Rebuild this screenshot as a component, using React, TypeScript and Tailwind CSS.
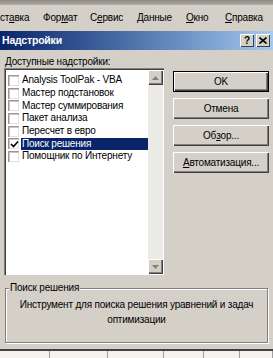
import React from 'react';

const menu = [
  { pre: 'ст', u: 'а', post: 'вка', w: 43 },
  { pre: 'Фор', u: 'м', post: 'ат', w: 47 },
  { pre: 'С', u: 'е', post: 'рвис', w: 47 },
  { pre: '', u: 'Д', post: 'анные', w: 49 },
  { pre: '', u: 'О', post: 'кно', w: 39 },
  { pre: '', u: 'С', post: 'правка', w: 48 },
];

const addins = [
  { name: 'Analysis ToolPak - VBA', checked: false },
  { name: 'Мастер подстановок', checked: false },
  { name: 'Мастер суммирования', checked: false },
  { name: 'Пакет анализа', checked: false },
  { name: 'Пересчет в евро', checked: false },
  { name: 'Поиск решения', checked: true },
  { name: 'Помощник по Интернету', checked: false },
];

const Check = ({ checked }: { checked: boolean }) => (
  <div className="w-[11px] h-[11px] bg-white border-l border-t border-[#9a9890] shadow-[inset_1px_1px_0_#c8c6c0,inset_-1px_-1px_0_#e4e2de] flex items-center justify-center shrink-0">
    {checked && (
      <svg width="9" height="9" viewBox="0 0 9 9">
        <path d="M1 4 L3.5 6.5 L8 1.5" stroke="#000" strokeWidth="1.6" fill="none" />
      </svg>
    )}
  </div>
);

const Btn = ({ children, def }: { children: React.ReactNode; def?: boolean }) => (
  <div
    className={
      'h-[21px] w-[96px] flex items-center justify-center bg-[#d4d0c8] text-black ' +
      (def
        ? 'border border-black shadow-[inset_1px_1px_0_#fff,inset_-1px_-1px_0_#404040,inset_-2px_-2px_0_#808080]'
        : 'shadow-[inset_1px_1px_0_#fff,inset_-1px_-1px_0_#404040,inset_-2px_-2px_0_#808080]')
    }
  >
    {children}
  </div>
);

const ScrollBtn = ({ up }: { up?: boolean }) => (
  <div className="w-[15px] h-[15px] bg-[#d4d0c8] shadow-[inset_1px_1px_0_#fff,inset_-1px_-1px_0_#404040,inset_-2px_-2px_0_#808080] flex items-center justify-center">
    <svg width="7" height="4" viewBox="0 0 7 4">
      <path d={up ? 'M0 4 L3.5 0 L7 4 Z' : 'M0 0 L3.5 4 L7 0 Z'} fill="#808080" />
    </svg>
  </div>
);

export default function App() {
  return (
    <div
      className="w-[273px] h-[358px] bg-[#d4d0c8] flex flex-col overflow-hidden text-[10px] tracking-[-0.2px] text-black"
      style={{ fontFamily: '"Liberation Sans", Arial, sans-serif' }}
    >
      <div className="h-[5px] bg-gradient-to-b from-[#8c8a84] to-[#b0ada6] shrink-0" />
      <div className="h-[24px] flex items-center text-[10px] shrink-0">
        {menu.map((m, i) => (
          <span key={i} className="shrink-0 whitespace-nowrap" style={{ width: m.w }}>
            {m.pre}
            <span className="underline">{m.u}</span>
            {m.post}
          </span>
        ))}
      </div>
      <div className="h-[2px] shrink-0" />
      <div className="h-[19px] flex items-center justify-between pl-[2px] pr-[3px] bg-gradient-to-r from-[#0a246a] to-[#a6caf0] shrink-0">
        <span className="text-white font-bold text-[10.5px]">Надстройки</span>
        <div className="flex gap-[2px]">
          <div className="w-[14px] h-[13px] bg-[#d4d0c8] shadow-[inset_1px_1px_0_#fff,inset_-1px_-1px_0_#404040] flex items-center justify-center font-bold text-[10px] leading-none">
            ?
          </div>
          <div className="w-[14px] h-[13px] bg-[#d4d0c8] shadow-[inset_1px_1px_0_#fff,inset_-1px_-1px_0_#404040] flex items-center justify-center">
            <svg width="8" height="7" viewBox="0 0 8 7">
              <path d="M0.5 0.5 L7.5 6.5 M7.5 0.5 L0.5 6.5" stroke="#000" strokeWidth="1.6" />
            </svg>
          </div>
        </div>
      </div>

      <div className="flex flex-col px-[4px] pt-[5px]">
        <div className="flex gap-[9px]">
          <div className="flex flex-col w-[160px]">
            <div className="h-[13px] leading-[13px] pl-[1px]">
              <span className="underline">Д</span>оступные надстройки:
            </div>
            <div className="h-[207px] bg-white flex shadow-[inset_1px_1px_0_#808080,inset_2px_2px_0_#404040,inset_-1px_-1px_0_#fff] pt-[2px] pl-[2px] pb-[1px] pr-[1px]">
              <div className="flex-1 flex flex-col pt-[4px] pl-[2px]">
                {addins.map((a) => (
                  <div key={a.name} className="h-[12.7px] flex items-center gap-[2px]">
                    <Check checked={a.checked} />
                    <span
                      className={
                        'px-[1px] leading-[12px] whitespace-nowrap ' +
                        (a.checked ? 'bg-[#0a246a] text-white flex-1' : '')
                      }
                    >
                      {a.name}
                    </span>
                  </div>
                ))}
              </div>
              <div className="w-[15px] flex flex-col justify-between bg-[#eceae6]">
                <ScrollBtn up />
                <ScrollBtn />
              </div>
            </div>
          </div>
          <div className="flex flex-col gap-[6px] pt-[16px]">
            <Btn def>OK</Btn>
            <Btn>Отмена</Btn>
            <Btn>
              Об<span className="underline">з</span>ор...
            </Btn>
            <Btn>
              <span className="underline">А</span>втоматизация...
            </Btn>
          </div>
        </div>

        <div className="relative mt-[13px] ml-[1px] mr-[1px] h-[55px] border border-[#808080] shadow-[1px_1px_0_#fff,inset_1px_1px_0_#fff]">
          <span className="absolute -top-[8px] left-[3px] bg-[#d4d0c8] px-[1px] leading-[13px]">
            Поиск решения
          </span>
          <div className="pt-[8px] px-[2px] text-center leading-[15px]">
            Инструмент для поиска решения уравнений и задач оптимизации
          </div>
        </div>
      </div>

      <div className="mt-auto h-[9px] border-t-2 border-[#404040] bg-[#f4f3ef] flex shrink-0">
        {[50, 58, 56, 40, 36, 33].map((w, i) => (
          <div key={i} className="border-r border-[#a0a0a0]" style={{ width: w }} />
        ))}
      </div>
    </div>
  );
}
